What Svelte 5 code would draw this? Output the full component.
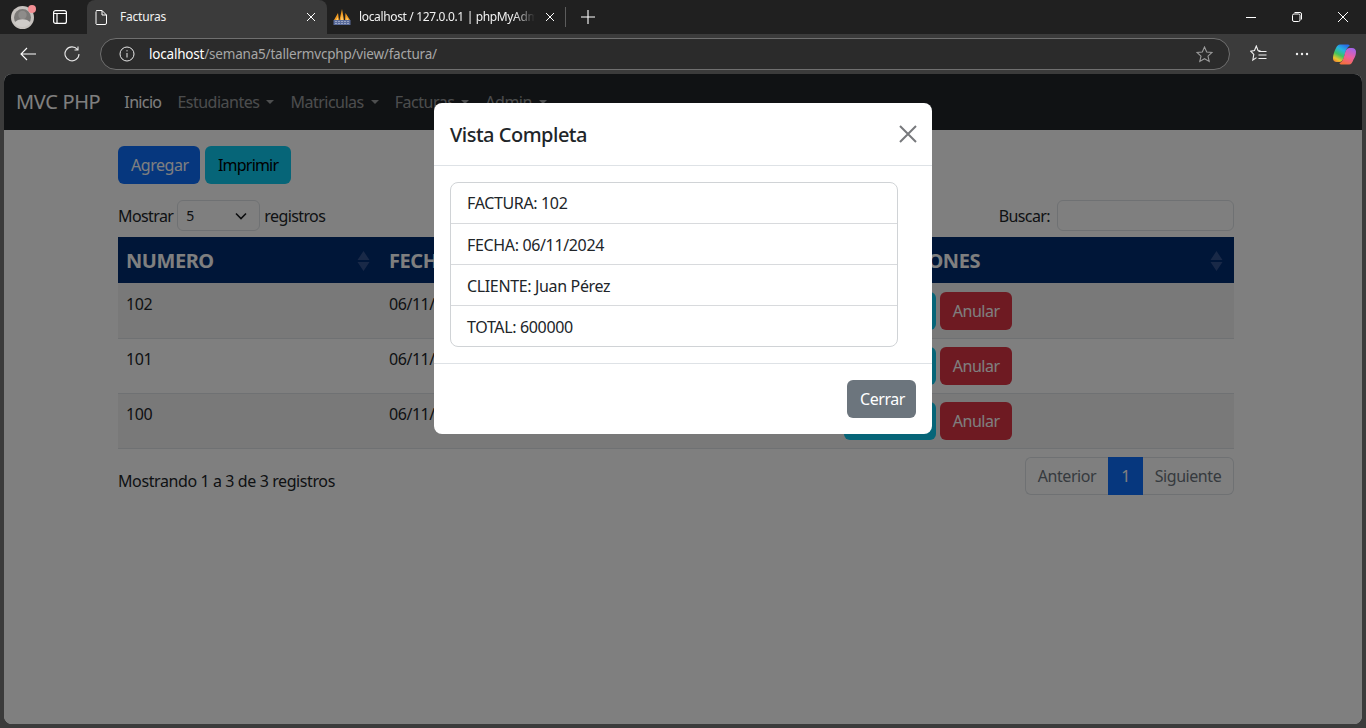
<script>
	const rows = [
		{ numero: 102, fecha: "06/11/2024", cliente: "Juan Pérez", total: 600000 },
		{ numero: 101, fecha: "06/11/2024", cliente: "Ana Gómez", total: 450000 },
		{ numero: 100, fecha: "06/11/2024", cliente: "Luis Díaz", total: 300000 },
	];
	const columns = ["NUMERO", "FECHA", "CLIENTE", "TOTAL", "OPERACIONES"];
	const menus = ["Estudiantes", "Matriculas", "Facturas", "Admin"];
	const detail = [
		"FACTURA: 102",
		"FECHA: 06/11/2024",
		"CLIENTE: Juan Pérez",
		"TOTAL: 600000",
	];
</script>

<div class="window">
	<div class="tabstrip">
		<div class="avatar">
			<svg width="23" height="23" viewBox="0 0 23 23">
				<circle cx="11.500" cy="11.500" r="11.500" fill="#c6c2be" />
				<circle cx="11.500" cy="11.500" r="8.500" fill="#7b7977" />
				<circle cx="11.500" cy="9" r="4.200" fill="#8e8c8a" />
				<path d="M3.500 17c2-3 4.500-3.800 8-3.800s6 .8 8 3.800c-2 2.600-4.800 4-8 4s-6-1.400-8-4z" fill="#cfccc9" />
			</svg>
			<span class="dot"></span>
		</div>
		<svg class="tablist" width="14" height="14" viewBox="0 0 14 14" fill="none" stroke="#fff" stroke-width="1.2">
			<rect x="0.6" y="0.6" width="12.8" height="12.8" rx="2" />
			<path d="M0.6 3.500h12.800M4 3.500v9.900" />
		</svg>
		<div class="tab active">
			<svg width="12" height="15" viewBox="0 0 12 15" fill="none" stroke="#fff" stroke-width="1">
				<path d="M1.500 0.500h5.500l4.500 4.500v8a1.500 1.500 0 0 1-1.500 1.500h-8.500a1.500 1.500 0 0 1-.5-1.500v-11a1 1 0 0 1 .5-1zM7 .5v4.500h4.500" />
			</svg>
			<span class="tab-title">Facturas</span>
			<svg class="tab-x" width="10" height="10" viewBox="0 0 10 10" stroke="#fff" stroke-width="1">
				<path d="M1 1l8 8M9 1l-8 8" />
			</svg>
		</div>
		<div class="tab second">
			<svg width="18" height="16" viewBox="0 0 18 16">
				<path d="M1 11L5 4l1 7zM6.500 11L9 0l2 11zM12 11l.5-7 4.500 7z" fill="#f29a1f" />
				<path d="M8 11l1-6 1 6zM3 11l2-3v3zM13.500 11V8l2 3z" fill="#fbd07a" />
				<rect x="0.500" y="11" width="17" height="5" fill="#5a6c9c" />
				<path d="M2 12.500h14M2 14.500h14" stroke="#a9b3cc" stroke-width="0.800" stroke-dasharray="2 1" />
			</svg>
			<span class="tab-title fade">localhost / 127.0.0.1 | phpMyAdmin</span>
			<svg class="tab-x" width="10" height="10" viewBox="0 0 10 10" stroke="#fff" stroke-width="1">
				<path d="M1 1l8 8M9 1l-8 8" />
			</svg>
		</div>
		<span class="divider"></span>
		<svg class="plus" width="14" height="14" viewBox="0 0 14 14" stroke="#fff" stroke-width="1.1">
			<path d="M7 0v14M0 7h14" />
		</svg>
		<div class="window-buttons">
			<svg width="10" height="10" viewBox="0 0 10 10" stroke="#fff" stroke-width="1"><path d="M0 5.500h10" /></svg>
			<svg width="10" height="10" viewBox="0 0 10 10" fill="none" stroke="#fff" stroke-width="1">
				<rect x="0.500" y="2" width="7.500" height="7.500" rx="1.500" />
				<path d="M2.500 .5h5.500a1.500 1.500 0 0 1 1.500 1.500v5.500" />
			</svg>
			<svg width="10" height="10" viewBox="0 0 10 10" stroke="#fff" stroke-width="1"><path d="M0 0l10 10M10 0l-10 10" /></svg>
		</div>
	</div>

	<div class="toolbar">
		<svg class="back" width="16" height="14" viewBox="0 0 16 14" fill="none" stroke="#fff" stroke-width="1.1">
			<path d="M16 7H1M7 1L1 7l6 6" />
		</svg>
		<svg class="reload" width="16" height="16" viewBox="0 0 16 16" fill="none" stroke="#e8e8e8" stroke-width="1.1">
			<path d="M13.500 3.500A7 7 0 1 0 15 8M14 .5v3.500h-3.500" />
		</svg>
		<div class="address">
			<svg width="16" height="16" viewBox="0 0 16 16" fill="none" stroke="#e8e8e8" stroke-width="1">
				<circle cx="8" cy="8" r="7" />
				<path d="M8 7v4.500M8 4.200v1.200" />
			</svg>
			<span class="url"><b>localhost</b>/semana5/tallermvcphp/view/factura/</span>
			<svg class="star" width="17" height="17" viewBox="0 0 17 17" fill="none" stroke="#9a9a9a" stroke-width="1.1">
				<path d="M8.500 1l2.200 5 5.300.5-4 3.600 1.200 5.400-4.700-2.800-4.700 2.800 1.200-5.400-4-3.600 5.300-.5z" />
			</svg>
		</div>
		<svg class="favs" width="17" height="18" viewBox="0 0 17 18" fill="none" stroke="#f0f0f0" stroke-width="1.1">
			<path d="M10.500 5.800L8 5.500 6.300 1 4.500 5.500 .8 6.200l3 3.300-1 5.500 3.700-2.400" />
			<path d="M8.500 6.500h8M8.500 10h8M8.500 13.500h8" />
		</svg>
		<svg class="dots" width="14" height="4" viewBox="0 0 14 4" fill="#f0f0f0">
			<circle cx="2" cy="2" r="1.200" /><circle cx="7" cy="2" r="1.200" /><circle cx="12" cy="2" r="1.200" />
		</svg>
		<svg class="copilot" width="23" height="21" viewBox="0 0 23 21">
			<defs>
				<linearGradient id="cpA" x1="0.700" y1="0" x2="0.200" y2="1">
					<stop offset="0" stop-color="#2a6fe8" />
					<stop offset="0.3" stop-color="#25b4e0" />
					<stop offset="0.6" stop-color="#3fc35f" />
					<stop offset="0.85" stop-color="#e6c82e" />
					<stop offset="1" stop-color="#f08a30" />
				</linearGradient>
				<linearGradient id="cpB" x1="0.700" y1="0" x2="0.300" y2="1">
					<stop offset="0" stop-color="#a664e8" />
					<stop offset="0.5" stop-color="#ee5f9e" />
					<stop offset="1" stop-color="#f4703a" />
				</linearGradient>
			</defs>
			<path d="M7 .5h8c1 0 2 .8 1.500 1.500-2 1-3.500 3.500-4.500 7.500-1 4-2 8.500-5.500 8.500H3.500C1.500 18 0 16.500 0 14.500 0 11 1.500 6.500 3 4c1-2.200 2.300-3.500 4-3.500z" fill="url(#cpA)" />
			<path d="M16 20.500H8c-1 0-1.800-.8-1.300-1.500 2.500-1 3.800-4 4.800-8s2-7 5-7h2.500c2.300 0 4 1.500 4 3.800 0 3-1 5.700-2.500 7.700-1 3-2.500 5-4.500 5z" fill="url(#cpB)" />
		</svg>
	</div>

	<div class="viewport">
		<nav class="navbar">
			<span class="brand">MVC PHP</span>
			<span class="nav-link current">Inicio</span>
			{#each menus as menu}
				<span class="nav-link">{menu}<i class="caret"></i></span>
			{/each}
		</nav>

		<main class="content">
			<div class="actions">
				<button class="btn primary">Agregar</button>
				<button class="btn info">Imprimir</button>
			</div>

			<div class="filters">
				<div class="length">
					Mostrar
					<span class="select">
						5
						<svg width="12" height="8" viewBox="0 0 12 8" fill="none" stroke="#1a1c1f" stroke-width="1.600">
							<path d="M1 1.500l5 5 5-5" />
						</svg>
					</span>
					registros
				</div>
				<div class="search">
					Buscar:
					<span class="input"></span>
				</div>
			</div>

			<table>
				<colgroup>
					<col style="width: 263px" />
					<col style="width: 228px" />
					<col style="width: 127px" />
					<col style="width: 100px" />
					<col style="width: 398px" />
				</colgroup>
				<thead>
					<tr>
						{#each columns as column}
							<th>
								<div class="th-inner">
									{column}
									<svg width="13" height="20" viewBox="0 0 13 20" fill="#33528f">
										<path d="M6.500 0l6 9H.5zM6.500 20l-6-9h12z" />
									</svg>
								</div>
							</th>
						{/each}
					</tr>
				</thead>
				<tbody>
					{#each rows as row}
						<tr>
							<td>{row.numero}</td>
							<td>{row.fecha}</td>
							<td>{row.cliente}</td>
							<td>{row.total}</td>
							<td class="row-actions">
								<button class="btn info">Detalle</button>
								<button class="btn danger">Anular</button>
							</td>
						</tr>
					{/each}
				</tbody>
			</table>

			<div class="table-footer">
				<span class="summary">Mostrando 1 a 3 de 3 registros</span>
				<div class="pagination">
					<span class="page prev">Anterior</span>
					<span class="page current-page">1</span>
					<span class="page next">Siguiente</span>
				</div>
			</div>
		</main>

		<div class="backdrop">
			<div class="modal">
				<header class="modal-header">
					<h5>Vista Completa</h5>
					<svg width="18" height="18" viewBox="0 0 18 18" stroke="#77797c" stroke-width="2">
						<path d="M1 1l16 16M17 1L1 17" />
					</svg>
				</header>
				<div class="modal-body">
					<ul>
						{#each detail as line}
							<li>{line}</li>
						{/each}
					</ul>
				</div>
				<footer class="modal-footer">
					<button class="btn secondary">Cerrar</button>
				</footer>
			</div>
		</div>
	</div>
</div>

<style>
	:global(body) {
		margin: 0;
		overflow: hidden;
		background: #3b3b3b;
	}

	.window {
		width: 1366px;
		height: 728px;
		display: flex;
		flex-direction: column;
		background: #3b3b3b;
		font-family: "Noto Sans", "Open Sans", sans-serif;
		font-size: 16px;
		letter-spacing: -0.45px;
		line-height: 24px;
		color: #212529;
		overflow: hidden;
	}

	/* browser chrome */
	.tabstrip {
		height: 34px;
		flex: none;
		display: flex;
		align-items: center;
		background: #202020;
	}

	.avatar {
		position: relative;
		width: 23px;
		height: 23px;
		margin-left: 11px;
	}

	.avatar svg {
		display: block;
	}

	.dot {
		position: absolute;
		top: -1px;
		right: -2px;
		width: 8px;
		height: 8px;
		border-radius: 50%;
		background: #f48f94;
	}

	.tablist {
		margin-left: 19px;
	}

	.tab {
		height: 34px;
		display: flex;
		align-items: center;
		color: #f2f2f2;
		font-size: 12px;
		letter-spacing: -0.2px;
	}

	.tab.active {
		width: 240px;
		margin-left: 20px;
		padding: 0 11px 0 8px;
		box-sizing: border-box;
		background: #3b3b3b;
		border-radius: 8px 8px 0 0;
	}

	.tab.second {
		width: 238px;
		padding: 0 10px 0 6px;
		box-sizing: border-box;
		letter-spacing: -0.35px;
	}

	.tab-title {
		flex: 1;
		min-width: 0;
		margin-left: 13px;
		white-space: nowrap;
		overflow: hidden;
	}

	.fade {
		margin-left: 8px;
		margin-right: 10px;
		-webkit-mask-image: linear-gradient(to right, #000 88%, transparent);
		mask-image: linear-gradient(to right, #000 88%, transparent);
	}

	.divider {
		width: 1px;
		height: 20px;
		background: #5c5c5c;
	}

	.plus {
		margin-left: 15px;
	}

	.window-buttons {
		margin-left: auto;
		margin-right: 18px;
		display: flex;
		gap: 36px;
	}

	.toolbar {
		height: 40px;
		flex: none;
		display: flex;
		align-items: center;
	}

	.back {
		margin-left: 20px;
	}

	.reload {
		margin-left: 28px;
	}

	.address {
		width: 1130px;
		height: 32px;
		margin-left: 20px;
		padding: 0 16px 0 18px;
		box-sizing: border-box;
		display: flex;
		align-items: center;
		background: #2b2b2b;
		border: 1px solid #6f6f6f;
		border-radius: 16px;
	}

	.url {
		margin-left: 14px;
		color: #a6a6a6;
		font-size: 13.500px;
		letter-spacing: -0.2px;
	}

	.url b {
		color: #fff;
		font-weight: 400;
	}

	.star {
		margin-left: auto;
	}

	.favs {
		margin-left: 20px;
	}

	.dots {
		margin-left: 28px;
	}

	.copilot {
		margin-left: 24px;
	}

	/* page */
	.viewport {
		position: relative;
		width: 1358px;
		height: 650px;
		margin-left: 4px;
		background: #fff;
		border-radius: 8px;
		overflow: hidden;
	}

	.navbar {
		height: 56px;
		padding-left: 12px;
		display: flex;
		align-items: center;
		background: #212529;
	}

	.brand {
		margin-right: 16px;
		color: #fff;
		font-size: 20px;
		letter-spacing: -0.35px;
	}

	.nav-link {
		padding: 0 8px;
		color: rgba(255, 255, 255, 0.55);
		display: flex;
		align-items: center;
		letter-spacing: -0.5px;
	}

	.nav-link.current {
		color: #fff;
		letter-spacing: -0.65px;
	}

	.caret {
		margin-left: 7px;
		border-top: 4.800px solid;
		border-left: 4.800px solid transparent;
		border-right: 4.800px solid transparent;
	}

	.content {
		width: 1116px;
		margin-left: 114px;
		padding-top: 16px;
	}

	.actions {
		display: flex;
		gap: 5px;
	}

	.actions .info {
		letter-spacing: -0.8px;
	}

	.btn {
		height: 38px;
		padding: 0 12px;
		border: 1px solid transparent;
		border-radius: 6px;
		font: inherit;
		letter-spacing: inherit;
		white-space: nowrap;
	}

	.primary {
		width: 82px;
		background: #0d6efd;
		color: #fff;
	}

	.info {
		width: 86px;
		background: #0dcaf0;
		color: #000;
	}

	.danger {
		width: 72px;
		background: #dc3545;
		color: #fff;
	}

	.secondary {
		width: 69px;
		background: #6c757d;
		color: #fff;
	}

	.filters {
		margin-top: 16px;
		height: 31px;
		display: flex;
		justify-content: space-between;
		align-items: center;
	}

	.length,
	.search {
		display: flex;
		align-items: center;
		gap: 4px;
		letter-spacing: -0.6px;
	}

	.search {
		gap: 7px;
	}

	.select {
		width: 83px;
		height: 31px;
		padding: 0 12px 0 8px;
		box-sizing: border-box;
		display: flex;
		align-items: center;
		justify-content: space-between;
		border: 1px solid #dee2e6;
		border-radius: 6px;
		font-size: 14px;
	}

	.input {
		display: block;
		width: 177px;
		height: 31px;
		box-sizing: border-box;
		border: 1px solid #dee2e6;
		border-radius: 6px;
	}

	table {
		width: 1116px;
		margin-top: 6px;
		border-collapse: separate;
		border-spacing: 0;
		table-layout: fixed;
	}

	th {
		height: 46px;
		padding: 2px 8px 0;
		box-sizing: border-box;
		background: #002c70;
		color: #fff;
		font-size: 20px;
		font-weight: 700;
		line-height: 26px;
		text-align: left;
		vertical-align: middle;
	}

	.th-inner {
		display: flex;
		align-items: center;
		justify-content: space-between;
		padding-right: 3px;
		white-space: nowrap;
	}

	td {
		height: 55px;
		padding: 8px;
		box-sizing: border-box;
		vertical-align: top;
		border-bottom: 1px solid #dee2e6;
		white-space: nowrap;
	}

	tbody tr:first-child td {
		height: 56px;
		padding-top: 9px;
	}

	tbody tr:nth-child(odd) td {
		background: #f2f2f2;
	}

	.row-actions .info {
		width: 92px;
		margin-right: 0;
	}

	.table-footer {
		margin-top: 8px;
		display: flex;
		justify-content: space-between;
		align-items: flex-start;
	}

	.summary {
		padding-top: 12px;
		letter-spacing: -0.4px;
	}

	.pagination {
		display: flex;
		height: 38px;
		box-sizing: border-box;
		color: #6c757d;
	}

	.page {
		display: flex;
		align-items: center;
		justify-content: center;
		box-sizing: border-box;
		border: 1px solid #dee2e6;
	}

	.prev {
		width: 83px;
		border-right: 0;
		border-radius: 6px 0 0 6px;
	}

	.current-page {
		width: 35px;
		background: #0d6efd;
		border-color: #0d6efd;
		color: #fff;
	}

	.next {
		width: 91px;
		border-left: 0;
		border-radius: 0 6px 6px 0;
	}

	/* modal */
	.backdrop {
		position: absolute;
		inset: 0;
		display: flex;
		justify-content: center;
		align-items: flex-start;
		padding-top: 29px;
		background: rgba(0, 0, 0, 0.5);
	}

	.modal {
		width: 498px;
		background: #fff;
		border-radius: 8px;
	}

	.modal-header {
		height: 62px;
		padding: 0 15px 0 16px;
		display: flex;
		align-items: center;
		justify-content: space-between;
		border-bottom: 1px solid #dee2e6;
	}

	h5 {
		margin: 2px 0 0;
		font-size: 20px;
		font-weight: 500;
		line-height: 30px;
		letter-spacing: -0.5px;
	}

	.modal-body {
		padding: 16px;
		height: 165px;
	}

	ul {
		width: 448px;
		margin: 0;
		padding: 0;
		box-sizing: border-box;
		list-style: none;
		border: 1px solid #d0d3d6;
		border-radius: 8px;
	}

	li {
		height: 41px;
		padding: 8px 16px;
		box-sizing: border-box;
		border-bottom: 1px solid #d8dadd;
		letter-spacing: -0.35px;
	}

	li + li {
		padding-top: 9px;
	}

	li:last-child {
		height: 40px;
		border-bottom: 0;
	}

	.modal-footer {
		height: 71px;
		padding: 16px;
		box-sizing: border-box;
		display: flex;
		justify-content: flex-end;
		border-top: 1px solid #dee2e6;
	}
</style>
